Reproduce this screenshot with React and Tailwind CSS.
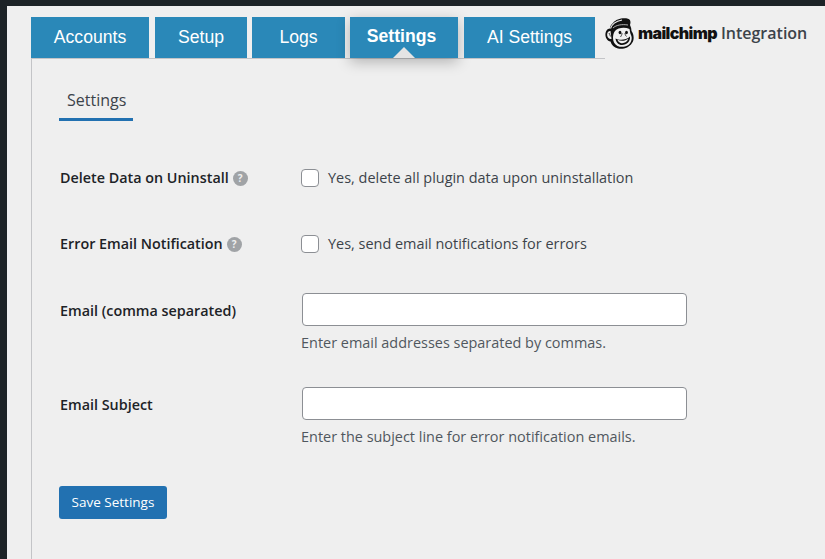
import React from 'react';

const tabs = [
    { name: 'Accounts', width: 'w-[118px]', ml: '' },
    { name: 'Setup', width: 'w-[92px]', ml: 'ml-[6px]' },
    { name: 'Logs', width: 'w-[93px]', ml: 'ml-[5px]' },
    { name: 'Settings', width: 'w-[108px]', ml: 'ml-[5px]', active: true },
    { name: 'AI Settings', width: 'w-[131px]', ml: 'ml-[6px]' },
];

const HelpIcon = () => (
    <span className="ml-[4px] inline-flex w-[15px] h-[15px] items-center justify-center rounded-full bg-[#a0a3a6] text-[10px] font-bold leading-none text-[#efefef]">
        ?
    </span>
);

const ChimpLogo = () => (
    <svg width="31" height="31" viewBox="0 0 31 31" className="shrink-0">
        {/* head + cap silhouette */}
        <path d="M8 5 C11 1 18 -0.5 23 0.8 C25.5 1.5 26 4 25 7 C26 9 26.5 11 26.5 13 C29 16 29.5 22 27 25 C24 30 18 31.5 13 30.5 C9 29.5 6.5 27 5.5 23.5 C1.5 23 -0.5 18 0.8 14 C1.5 11.5 3.5 10.5 5 10.5 C5 8.5 6 6.5 8 5 Z" fill="#111" />
        {/* cap highlight */}
        <path d="M5.5 10.5 C6.5 7 10 3.5 17 2" fill="none" stroke="#efefef" strokeWidth="1.1" />
        <path d="M8 10 C11 7 17 6 23 7" fill="none" stroke="#efefef" strokeWidth="0.7" />
        {/* ear */}
        <path d="M5.5 13 C3 12.5 1.8 15 2.2 17.5 C2.6 20 4.5 21.5 6.5 21 Z" fill="#efefef" />
        <path d="M4 15 C4.5 16 5 17 5.5 18.5" fill="none" stroke="#111" strokeWidth="0.8" />
        {/* face */}
        <path d="M10 13 C13 9.5 20 9 24.5 11 C25 13 25 15 26 17 C27.5 20 26.5 24 24 26.5 C21 29 16 29.5 12.5 28 C9.5 26.5 8 23.5 8 20 C8 17.5 8.5 15 10 13 Z" fill="#efefef" />
        <ellipse cx="15" cy="14.5" rx="1.4" ry="1.7" fill="#111" />
        <ellipse cx="21.5" cy="14.5" rx="1.4" ry="1.7" fill="#111" />
        <path d="M17 15 C17 17 16 18 15.5 19 M20 15 C20 17 21 18 21.5 18.5" fill="none" stroke="#111" strokeWidth="0.8" />
        {/* mouth */}
        <path d="M10.5 20.5 C14 22.5 21 22.5 25 18.5 C25.5 23 22 27 17 27 C13.5 27 11 24.5 10.5 20.5 Z" fill="#111" />
        <path d="M12.5 21.8 C16 23.5 20.5 23 23.3 20.8 C22.5 23.5 19.5 25.5 16.5 25.2 C14.5 25 13 23.5 12.5 21.8 Z" fill="#efefef" />
    </svg>
);

const CheckRow = ({ label, help, mt }) => (
    <div className={`flex items-center h-[20px] ${mt}`}>
        <div className="w-[242px] pl-[1px] flex items-center text-[14.35px] leading-[20px] font-semibold text-[#1d2327]">
            {label}
            <HelpIcon />
        </div>
        <input type="checkbox" className="appearance-none w-[18px] h-[18px] rounded-[4px] border border-[#8c8f94] bg-white" />
        <span className="ml-[9px] text-[14.45px] leading-[20px] text-[#3c434a]">{help}</span>
    </div>
);

const InputRow = ({ label, help, mt }) => (
    <div className={`flex ${mt}`}>
        <div className="w-[243px] pl-[1px] pt-[8px] text-[14.35px] leading-[20px] font-semibold text-[#1d2327]">{label}</div>
        <div>
            <input type="text" className="block w-[385px] h-[33px] rounded-[4px] border border-[#8c8f94] bg-white" />
            <p className="mt-[6px] -ml-[1px] text-[14.45px] leading-[22px] text-[#50575e]">{help}</p>
        </div>
    </div>
);

export default function App() {
    return (
        <div className="flex h-[559px] w-[825px] overflow-hidden bg-[#1d2327] font-['Open_Sans','Noto_Sans',sans-serif]">
            <div className="w-[7px] shrink-0" />
            <div className="flex-1 flex flex-col">
                <div className="h-[6px] shrink-0" />
                <div className="flex-1 bg-[#efefef] pl-[24px] pt-[11px] flex flex-col">
                    <div className="flex items-center h-[42px]">
                        <div className="flex h-[42px] w-[574px] border-b border-[#c3c4c7]">
                            {tabs.map((tab) => (
                                <div
                                    key={tab.name}
                                    className={`relative flex h-[41px] items-center justify-center bg-[#2a88b8] font-['Liberation_Sans',sans-serif] text-[17.6px] text-white ${tab.width} ${tab.ml} ${tab.active ? 'font-bold pr-[5px] shadow-[0_4px_14px_rgba(0,0,0,0.25)]' : ''}`}
                                >
                                    <span className={tab.active ? 'mb-[3px]' : ''}>{tab.name}</span>
                                    {tab.active && (
                                        <span className="absolute bottom-0 left-[43px] h-0 w-0 border-x-[11px] border-b-[11px] border-x-transparent border-b-[#e4e4e4]" />
                                    )}
                                </div>
                            ))}
                        </div>
                        <div className="-mt-[10px] flex items-center">
                            <ChimpLogo />
                            <span className="ml-[2px] font-['Inter',sans-serif] text-[16px] font-black tracking-[-0.6px] text-[#111]">mailchimp</span>
                            <span className="ml-[4px] -mt-[1px] text-[16px] font-semibold text-[#3c434a]">Integration</span>
                        </div>
                    </div>
                    <div className="flex-1 border-l border-[#c3c4c7] pl-[27px]">
                        <div className="mt-[29px] inline-block w-[74px] border-b-[3px] border-[#2271b1] pb-[6px] pl-[8px] text-[16px] leading-[24px] text-[#3c434a]">
                            Settings
                        </div>
                        <CheckRow mt="mt-[47px]" label="Delete Data on Uninstall" help="Yes, delete all plugin data upon uninstallation" />
                        <CheckRow mt="mt-[46px]" label="Error Email Notification" help="Yes, send email notifications for errors" />
                        <InputRow mt="mt-[39px]" label="Email (comma separated)" help="Enter email addresses separated by commas." />
                        <InputRow mt="mt-[33px]" label="Email Subject" help="Enter the subject line for error notification emails." />
                        <button className="mt-[38px] h-[33px] w-[108px] rounded-[3px] bg-[#2271b1] text-[13.5px] text-white">
                            Save Settings
                        </button>
                    </div>
                </div>
            </div>
        </div>
    );
}
